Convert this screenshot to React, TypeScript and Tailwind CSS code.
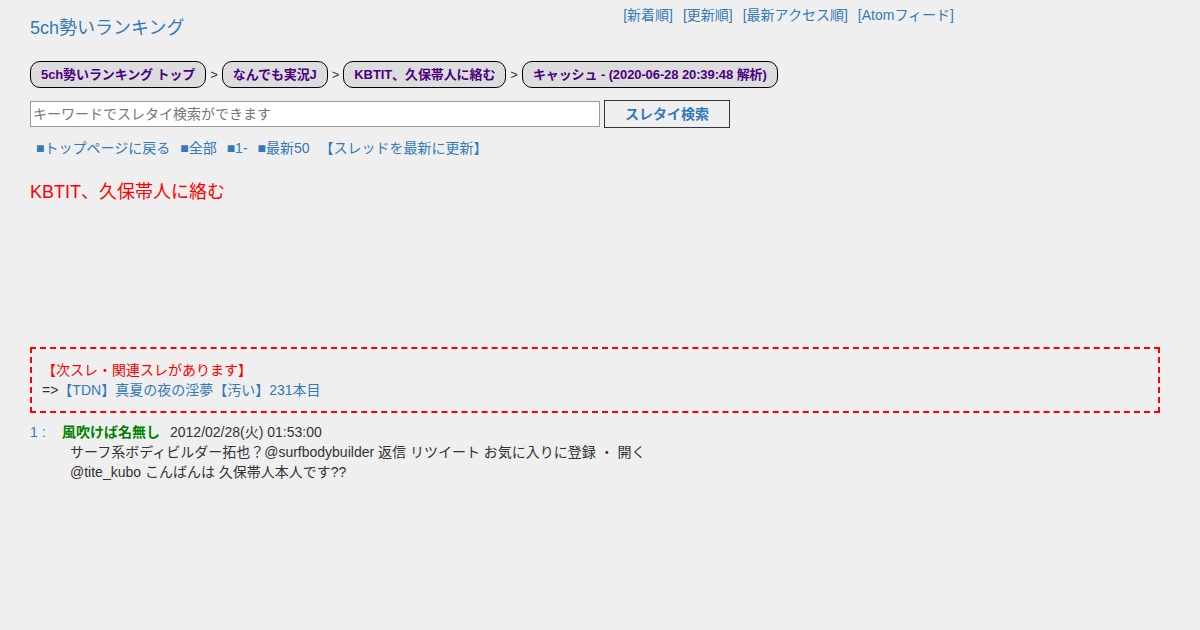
export default function App() {
  const crumbs = [
    '5ch勢いランキング トップ',
    'なんでも実況J',
    'KBTIT、久保帯人に絡む',
    'キャッシュ - (2020-06-28 20:39:48 解析)',
  ];

  return (
    <div
      className="min-h-[630px] bg-[#efefef] text-[#333] px-[30px]"
      style={{ fontFamily: '"Liberation Sans", "Noto Sans CJK JP", sans-serif' }}
    >
      {/* Header */}
      <div className="flex w-[924px] justify-between items-start">
        <a className="text-[18px] text-[#337ab7] mt-[16px] leading-[24px]">5ch勢いランキング</a>
        <div className="flex gap-[10px] text-[14px] text-[#337ab7] leading-[20px] mt-[5px]">
          <a>[新着順]</a>
          <a>[更新順]</a>
          <a>[最新アクセス順]</a>
          <a>[Atomフィード]</a>
        </div>
      </div>

      {/* Breadcrumb */}
      <div className="flex items-center mt-[21px] text-[13px]">
        {crumbs.map((c, i) => (
          <div key={c} className="flex items-center">
            {i > 0 && <span className="mx-[4px] text-[#333]">&gt;</span>}
            <span className="h-[27px] flex items-center px-[10px] rounded-[10px] border border-black bg-[#dddddd] font-bold text-[#4b0082] tracking-[-0.1px]">
              {c}
            </span>
          </div>
        ))}
      </div>

      {/* Search */}
      <div className="flex items-center gap-[4px] mt-[12px]">
        <input
          className="w-[570px] h-[26px] bg-white border border-[#999] px-[2px] text-[14px] text-[#333] placeholder:text-[#757575] outline-none"
          placeholder="キーワードでスレタイ検索ができます"
        />
        <button className="w-[126px] h-[28px] border border-[#333] bg-[#efefef] text-[14px] font-bold text-[#337ab7]">
          スレタイ検索
        </button>
      </div>

      {/* Thread links */}
      <div className="flex gap-[10px] mt-[10px] ml-[6px] text-[14px] text-[#337ab7] leading-[20px]">
        <a>■トップページに戻る</a>
        <a>■全部</a>
        <a>■1-</a>
        <a>■最新50</a>
        <a>【スレッドを最新に更新】</a>
      </div>

      <h1 className="mt-[22px] text-[18px] text-[#ff0000] leading-[24px]">KBTIT、久保帯人に絡む</h1>

      {/* Related box */}
      <div className="mt-[143px] w-[1130px] border-2 border-dashed border-[#ff0000] px-[10px] py-[11px] text-[14px] leading-[20px]">
        <div className="text-[#ff0000]">【次スレ・関連スレがあります】</div>
        <div>
          =&gt;<a className="text-[#337ab7]">【TDN】真夏の夜の淫夢【汚い】231本目</a>
        </div>
      </div>

      {/* Post */}
      <div className="mt-[9px] text-[14px] leading-[20px]">
        <div className="flex">
          <span className="text-[#337ab7] w-[32px]">1 :</span>
          <span className="font-bold text-[#008000]">風吹けば名無し</span>
          <span className="ml-[10px]">2012/02/28(火) 01:53:00</span>
        </div>
        <div className="ml-[40px]">
          <div>サーフ系ボディビルダー拓也？@surfbodybuilder 返信 リツイート お気に入りに登録 ・ 開く</div>
          <div>@tite_kubo こんばんは 久保帯人本人です??</div>
        </div>
      </div>
    </div>
  );
}
